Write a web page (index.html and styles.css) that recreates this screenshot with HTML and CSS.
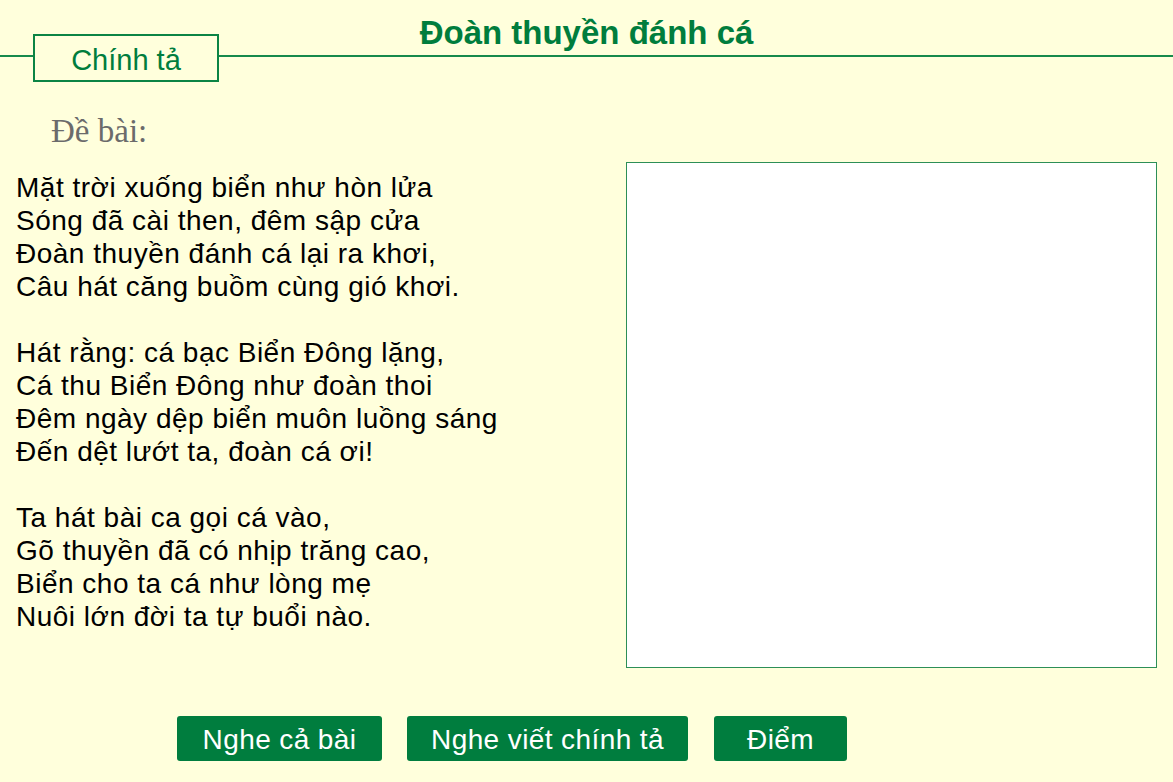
FILE: index.html
```html
<!DOCTYPE html>
<html lang="vi">
<head>
<meta charset="utf-8">
<title>Đoàn thuyền đánh cá</title>
<link rel="stylesheet" href="styles.css">
</head>
<body>
<header class="header">
  <h1 class="title">Đoàn thuyền đánh cá</h1>
  <div class="tabrow">
    <div class="rule rule-left"></div>
    <div class="tab">Chính tả</div>
    <div class="rule rule-right"></div>
  </div>
</header>
<main class="main">
  <section class="left">
    <h2 class="prompt">Đề bài:</h2>
    <div class="poem">
      <p class="stanza">Mặt trời xuống biển như hòn lửa<br>Sóng đã cài then, đêm sập cửa<br>Đoàn thuyền đánh cá lại ra khơi,<br>Câu hát căng buồm cùng gió khơi.</p>
      <p class="stanza">Hát rằng: cá bạc Biển Đông lặng,<br>Cá thu Biển Đông như đoàn thoi<br>Đêm ngày dệp biển muôn luồng sáng<br>Đến dệt lướt ta, đoàn cá ơi!</p>
      <p class="stanza">Ta hát bài ca gọi cá vào,<br>Gõ thuyền đã có nhịp trăng cao,<br>Biển cho ta cá như lòng mẹ<br>Nuôi lớn đời ta tự buổi nào.</p>
    </div>
  </section>
  <textarea class="answer"></textarea>
</main>
<div class="actions">
  <button class="btn btn-all">Nghe cả bài</button>
  <button class="btn btn-dict">Nghe viết chính tả</button>
  <button class="btn btn-score">Điểm</button>
</div>
</body>
</html>
```
FILE: styles.css
```css
html, body {
  margin: 0;
  padding: 0;
}
body {
  background: #ffffdc;
  font-family: "Liberation Sans", Arial, sans-serif;
  width: 1173px;
  height: 782px;
  overflow: hidden;
}
.header {
  display: grid;
  height: 82px;
}
.title {
  grid-area: 1 / 1;
  margin: 0;
  padding-top: 14px;
  font-size: 33px;
  line-height: 38px;
  font-weight: bold;
  color: #007d3d;
  text-align: center;
}
.tabrow {
  grid-area: 1 / 1;
  display: flex;
  align-items: flex-start;
  padding-top: 34px;
}
.rule {
  height: 2px;
  margin-top: 21px;
  background: #178a4c;
}
.rule-left {
  width: 33px;
}
.rule-right {
  flex: 1;
}
.tab {
  box-sizing: border-box;
  width: 186px;
  height: 48px;
  border: 2px solid #0b8444;
  color: #007d3d;
  font-size: 29px;
  line-height: 40px;
  padding-top: 4px;
  text-align: center;
}
.main {
  display: flex;
  justify-content: space-between;
  margin-top: 29px;
  padding: 0 16px;
}
.left {
  display: flex;
  flex-direction: column;
}
.prompt {
  margin: 0 0 0 35px;
  font-family: "Liberation Serif", "Times New Roman", serif;
  font-weight: normal;
  font-size: 33px;
  line-height: 40px;
  color: #6b6b6b;
}
.poem {
  margin-top: 20px;
  font-size: 28px;
  line-height: 33px;
  letter-spacing: 0.5px;
  color: #000;
}
.stanza {
  margin: 0 0 33px;
}
.answer {
  box-sizing: border-box;
  width: 531px;
  height: 506px;
  margin-top: 51px;
  border: 1px solid #2d8f57;
  background: #fff;
  resize: none;
  outline: none;
  padding: 4px;
}
.actions {
  display: flex;
  gap: 25px;
  margin-top: 48px;
  padding-left: 177px;
}
.btn {
  box-sizing: border-box;
  height: 45px;
  border: none;
  border-radius: 3px;
  background: #007d3e;
  color: #fff;
  font-family: "Liberation Sans", Arial, sans-serif;
  font-size: 28px;
  line-height: 43px;
  padding: 2px 0 0;
  letter-spacing: 0.4px;
  text-align: center;
}
.btn-all {
  width: 205px;
}
.btn-dict {
  width: 281px;
}
.btn-score {
  width: 133px;
  margin-left: 1px;
}
```
